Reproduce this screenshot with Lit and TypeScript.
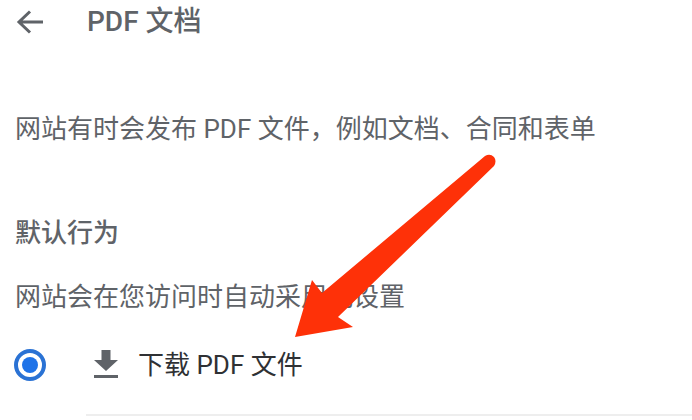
import { LitElement, html, css } from "lit";
import { customElement } from "lit/decorators.js";

@customElement("app-root")
export class AppRoot extends LitElement {
  static styles = css`
    :host {
      display: block;
      position: relative;
      width: 692px;
      height: 420px;
      overflow: hidden;
      background: #fff;
      font-family: "Roboto", "Noto Sans CJK SC", sans-serif;
      color: #5f6368;
    }
    .header {
      display: flex;
      align-items: center;
      height: 44px;
      padding-left: 15px;
    }
    .back { width: 30px; height: 30px; margin-right: 42px; flex: none; }
    .title { font-size: 28px; font-weight: 500; line-height: 44px; }
    .text { font-size: 26px; line-height: 36px; margin: 0; padding-left: 15px; white-space: nowrap; }
    .intro { margin-top: 67px; }
    .section { margin-top: 68px; font-weight: 500; font-size: 26px; line-height: 36px; padding-left: 15px; }
    .desc { margin-top: 28px; }
    .option { display: flex; align-items: center; height: 48px; margin-top: 26px; padding-left: 14px; }
    .radio {
      width: 32px; height: 32px; box-sizing: border-box; flex: none;
      border: 4px solid #2a72d4; border-radius: 50%;
      display: flex; align-items: center; justify-content: center;
      margin-right: 44px;
    }
    .dot { width: 16px; height: 16px; border-radius: 50%; background: #1f73e8; }
    .dl { width: 30px; height: 30px; flex: none; margin-right: 18px; }
    .label { font-size: 26px; color: #2f3134; padding-bottom: 6px; }
    .rule { height: 2px; background: #eeeeee; margin: 25px 0 0 86px; }
    .arrow { position: absolute; left: 0; top: 0; width: 692px; height: 420px; pointer-events: none; }
  `;

  render() {
    return html`
      <div class="header">
        <svg class="back" viewBox="0 0 30 30">
          <path d="M28 15H4M15 4.5 4 15l11 10.5" fill="none" stroke="#5f6368" stroke-width="3"/>
        </svg>
        <span class="title">PDF 文档</span>
      </div>
      <p class="text intro">网站有时会发布 PDF 文件，例如文档、合同和表单</p>
      <div class="section">默认行为</div>
      <p class="text desc">网站会在您访问时自动采用此设置</p>
      <div class="option">
        <span class="radio"><span class="dot"></span></span>
        <svg class="dl" viewBox="0 0 30 30">
          <path d="M11.5 0h9v10H28L16 21 4 10h7.5z M4 25h24v3H4z" fill="#5f6368"/>
        </svg>
        <span class="label">下载 PDF 文件</span>
      </div>
      <div class="rule"></div>
      <svg class="arrow" viewBox="0 0 692 420">
        <path d="M295 337 312 280 322 293 485 156Q490 153 494 157 497 161 494 166L338 317 353 327Z" fill="#fe3108"/>
      </svg>
    `;
  }
}
